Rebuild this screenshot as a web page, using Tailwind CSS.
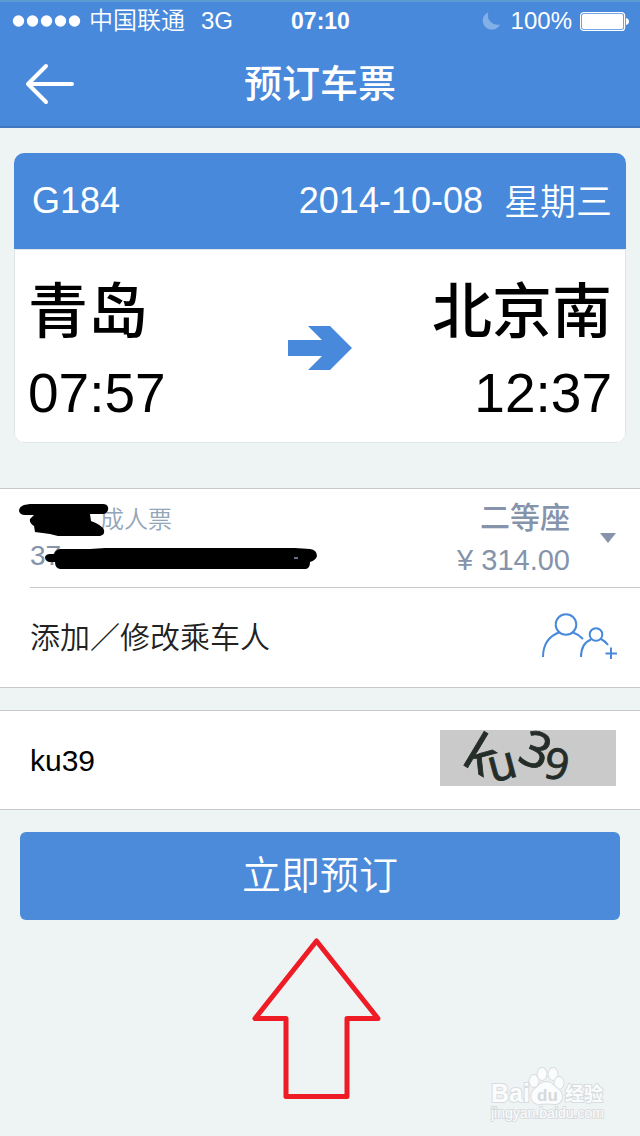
<!DOCTYPE html>
<html lang="zh-CN">
<head>
  <meta charset="UTF-8" />
  <meta name="viewport" content="width=device-width, initial-scale=1.0" />
  <title>预订车票</title>
  <script src="https://cdn.jsdelivr.net/npm/@tailwindcss/browser@4"></script>
</head>
<body class="relative min-h-screen bg-[#eef3f4] text-black font-['Liberation_Sans','Noto_Sans_CJK_SC',sans-serif]">

  <header class="bg-[#4889db] text-white border-t-2 border-t-[#5a9bd2] border-b-2 border-b-[#4077bf]">
    <!-- Status bar -->
    <div class="grid grid-cols-[1fr_auto_1fr] items-center h-[38px] pl-3 pr-[11px] text-[24px] leading-[38px]">
      <div class="flex items-center">
        <svg class="w-[69px] h-3" viewBox="0 0 69 12" fill="currentColor">
          <circle cx="6.5" cy="6" r="5.7" /><circle cx="20.5" cy="6" r="5.7" /><circle cx="34.5" cy="6" r="5.7" /><circle cx="48.5" cy="6" r="5.7" /><circle cx="62.5" cy="6" r="5.7" />
        </svg>
        <span class="ml-2 font-[350]">中国联通</span>
        <span class="ml-4">3G</span>
      </div>
      <div class="text-[23px] font-bold">07:10</div>
      <div class="flex items-center justify-end">
        <svg class="w-5 h-5" viewBox="0 0 20 20" fill="#84b0e8">
          <path d="M7.5 1.2A9 9 0 1 0 19 13.2A9.2 9.2 0 0 1 7.5 1.2Z" />
        </svg>
        <span class="ml-2.5">100%</span>
        <svg class="ml-2 w-[49px] h-[19px]" viewBox="0 0 49 19">
          <rect x="0.6" y="0.6" width="44" height="17.8" rx="3" fill="none" stroke="white" stroke-width="1.2" />
          <rect x="2" y="2" width="41.2" height="15" rx="1.8" fill="white" />
          <path d="M46 6q3 .6 3 3.5t-3 3.5z" fill="white" />
        </svg>
      </div>
    </div>

    <!-- Title bar -->
    <div class="grid grid-cols-[1fr_auto_1fr] items-center h-[86px] px-6 pt-0.5">
      <button type="button" aria-label="返回" class="w-[52px] h-11">
        <svg class="w-[52px] h-11" viewBox="0 0 52 44" fill="none" stroke="white" stroke-width="4" stroke-linecap="round" stroke-linejoin="round">
          <path d="M48 22H4M22 4L4 22L22 40" />
        </svg>
      </button>
      <h1 class="text-[38px] leading-[44px] font-medium">预订车票</h1>
      <div></div>
    </div>
  </header>

  <main>
    <!-- Train card -->
    <section class="mx-3.5 mt-[25px] rounded-[10px] overflow-hidden bg-white">
      <div class="flex items-center justify-between h-24 pl-[18px] pr-3.5 bg-[#4889db] text-white text-[36px] leading-[44px]">
        <span>G184</span>
        <div class="flex items-center gap-[21px]">
          <span>2014-10-08</span>
          <span class="pt-1 font-[350]">星期三</span>
        </div>
      </div>
      <div class="flex items-center justify-between h-[194px] px-[13px] border border-[#dfe5e9] rounded-b-[10px]">
        <div class="pt-3.5">
          <div class="text-[60px] leading-[80px] font-medium">青岛</div>
          <div class="text-[55px] leading-[80px]">07:57</div>
        </div>
        <svg class="absolute left-1/2 -ml-8 mt-1 w-16 h-11" viewBox="0 0 64 44" fill="#4889db">
          <path d="M0 14H34L20 0H42L64 22L42 44H20L34 30H0Z" />
        </svg>
        <div class="pt-3.5 text-right">
          <div class="text-[60px] leading-[80px] font-medium">北京南</div>
          <div class="text-[55px] leading-[80px]">12:37</div>
        </div>
      </div>
    </section>

    <!-- Passenger -->
    <section class="mt-[45px] bg-white border-y border-[#c8c8cc]">
      <div class="relative flex items-center ml-[30px] pr-6 h-[99px] border-b border-[#c8c8cc] text-[#8593ab]">
        <div class="flex-1">
          <div class="pl-[70px] text-[24px] leading-[36px] font-[350] text-[#93a5b8]">成人票</div>
          <div class="text-[28px] leading-[36px]">37</div>
        </div>
        <div class="text-right">
          <div class="text-[30px] leading-[44px] font-medium">二等座</div>
          <div class="text-[29px] leading-[40px]">¥ 314.00</div>
        </div>
        <button type="button" aria-label="选择席别" class="ml-[30px]">
          <svg class="w-4 h-2.5" viewBox="0 0 16 10" fill="currentColor"><path d="M0 0H16L8 10Z" /></svg>
        </button>
        <!-- Blacked out name and ID number -->
        <svg class="absolute -left-[30px] top-0 w-[330px] h-[98px]" viewBox="0 0 330 98">
          <path d="M24 16Q19 18 19 22Q20 26 25 26H34L30 30Q29 34 34 37L35 43L50 45L58 47H100Q105 46 104 41Q102 36 91 32L90 25H104Q109 23 108 18Q107 15 103 15H30Z" />
          <path d="M60 60L90 60L105 59H295L310 60Q317 61 317 67Q316 71 310 73Q310 79 306 80H60Q55 79 55 73H49Q45 72 45 68Q46 65 50 65H54Q55 61 60 60Z" />
          <path d="M294 69h4" stroke="#8593ab" stroke-width="1.5" />
        </svg>
      </div>
      <div class="flex items-center justify-between h-[99px] pl-[30px] pr-[22px]">
        <a href="#" class="text-[30px] leading-[44px] font-[350] text-[#222222]">添加／修改乘车人</a>
        <svg class="mb-1.5 w-[78px] h-[50px]" viewBox="0 0 78 50" fill="none" stroke="#4889db" stroke-width="2">
          <circle cx="26" cy="14.5" r="10.3" />
          <path d="M3 47C3 34 9 26 20 22M32 22Q38 24 43 29" />
          <circle cx="56" cy="24.5" r="6.3" />
          <path d="M41 47C41 38 44.5 32 51 29.5M61 29Q65 31 68 35M71 37.5V49M65.5 43.5H77" />
        </svg>
      </div>
    </section>

    <!-- Captcha -->
    <section class="mt-[22px] flex items-center justify-between h-[100px] pl-[30px] pr-6 bg-white border-y border-[#c8c8cc]">
      <input type="text" value="ku39" aria-label="验证码" class="flex-1 min-w-0 h-11 text-[30px] outline-none" />
      <svg class="mb-1 w-44 h-14 bg-[#cacaca] font-['Noto_Sans',sans-serif]" viewBox="0 0 176 56" fill="#252d29" stroke="#252d29" stroke-width="0.8">
        <text transform="translate(20 33) rotate(31)" font-size="52">k</text>
        <text transform="translate(52 53) rotate(-15)" font-size="46">u</text>
        <text transform="translate(76 31) rotate(22)" font-size="50">3</text>
        <text transform="translate(102 47) rotate(10)" font-size="43">9</text>
      </svg>
    </section>

    <div class="px-5 pt-[22px]">
      <button type="button" class="w-full h-[88px] rounded-md bg-[#4b8bda] text-white text-[39px] leading-[88px] font-[350]">立即预订</button>
    </div>

    <!-- Pointer to the submit button -->
    <svg class="mx-auto mt-[17px] w-[136px] h-[164px]" viewBox="0 0 136 164" fill="none" stroke="#ee1c24" stroke-width="5" stroke-linejoin="round">
      <path d="M64.5 4L3 81.5H34V159.5H95V81.5H126Z" />
    </svg>
  </main>

  <!-- Watermark -->
  <div class="absolute right-[34px] bottom-[14px] w-[116px] text-[#fbfcfd]">
    <svg class="w-[116px] h-[56px]" viewBox="0 0 116 56" fill="currentColor" stroke="#d9dddf" stroke-width="2" paint-order="stroke">
      <ellipse cx="44" cy="15" rx="4.5" ry="6" />
      <ellipse cx="52" cy="8" rx="4.5" ry="6" />
      <ellipse cx="63" cy="8" rx="4.5" ry="6" />
      <ellipse cx="69" cy="17" rx="4.5" ry="6" />
      <path d="M56 16C50 16 49 20 45 23C38 29 42 38 49 38Q57 37 65 38C72 38 75 29 68 23C64 20 62 16 56 16Z" />
      <text x="1" y="36" font-size="25" font-weight="bold">Bai</text>
      <text x="47" y="35" font-size="17" font-weight="bold" fill="#d5d9db" stroke="none">du</text>
      <text x="75" y="35" font-size="19" font-weight="bold">经验</text>
      <text x="1" y="52" font-size="14">jingyan.baidu.com</text>
    </svg>
  </div>

</body>
</html>
